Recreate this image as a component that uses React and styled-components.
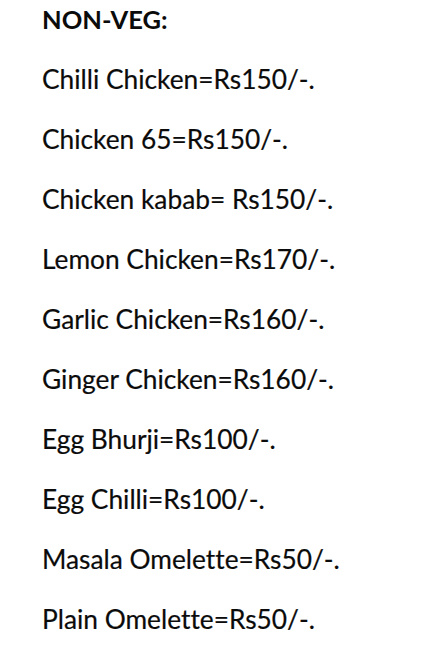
import styled, { createGlobalStyle } from "styled-components";

const GlobalStyle = createGlobalStyle`
  html, body {
    margin: 0;
    padding: 0;
    background: #ffffff;
  }
`;

const Page = styled.div`
  width: 433px;
  height: 650px;
  box-sizing: border-box;
  padding: 0 0 0 42px;
  display: flex;
  flex-direction: column;
  gap: 22px;
  background: #ffffff;
  font-family: Lato, "Open Sans", sans-serif;
  font-variant-ligatures: none;
  color: #0b0b0b;
  overflow: hidden;
`;

const Heading = styled.div`
  font-size: 25.5px;
  font-weight: 700;
  line-height: 38px;
`;

const Item = styled.div`
  font-size: 26.3px;
  font-weight: 400;
  line-height: 38px;
  white-space: nowrap;
  -webkit-text-stroke: 0.2px #0b0b0b;
`;

const items = [
  "Chilli Chicken=Rs150/-.",
  "Chicken 65=Rs150/-.",
  "Chicken kabab= Rs150/-.",
  "Lemon Chicken=Rs170/-.",
  "Garlic Chicken=Rs160/-.",
  "Ginger Chicken=Rs160/-.",
  "Egg Bhurji=Rs100/-.",
  "Egg Chilli=Rs100/-.",
  "Masala Omelette=Rs50/-.",
  "Plain Omelette=Rs50/-.",
];

function App() {
  return (
    <>
      <GlobalStyle />
      <Page>
        <Heading>NON-VEG:</Heading>
        {items.map((item) => (
          <Item key={item}>{item}</Item>
        ))}
      </Page>
    </>
  );
}

export default App;
